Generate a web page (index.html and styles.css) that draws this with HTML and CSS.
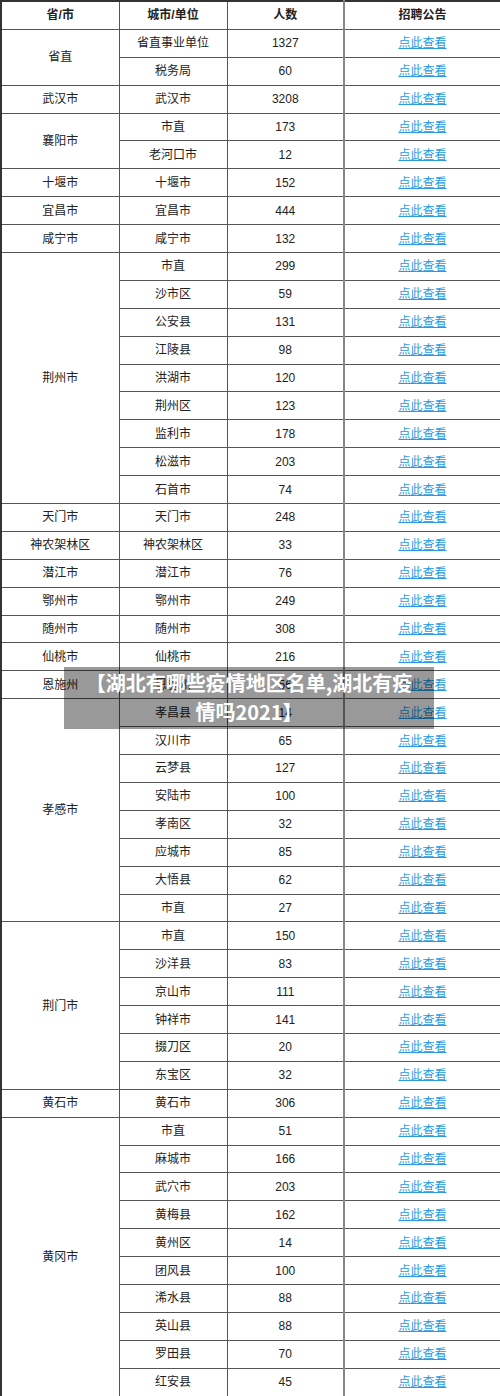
FILE: index.html
```html
<!DOCTYPE html>
<html lang="zh-CN">
<head>
<meta charset="utf-8">
<title>湖北有哪些疫情地区名单</title>
<link rel="stylesheet" href="styles.css">
</head>
<body>
<div class="page">
<table class="recruit">
<colgroup><col class="c1"><col class="c2"><col class="c3"><col class="c4"></colgroup>
<thead>
<tr><th>省/市</th><th>城市/单位</th><th>人数</th><th>招聘公告</th></tr>
</thead>
<tbody>
<tr><td rowspan="2">省直</td><td>省直事业单位</td><td>1327</td><td><a href="#">点此查看</a></td></tr>
<tr><td>税务局</td><td>60</td><td><a href="#">点此查看</a></td></tr>
<tr><td>武汉市</td><td>武汉市</td><td>3208</td><td><a href="#">点此查看</a></td></tr>
<tr><td rowspan="2">襄阳市</td><td>市直</td><td>173</td><td><a href="#">点此查看</a></td></tr>
<tr><td>老河口市</td><td>12</td><td><a href="#">点此查看</a></td></tr>
<tr><td>十堰市</td><td>十堰市</td><td>152</td><td><a href="#">点此查看</a></td></tr>
<tr><td>宜昌市</td><td>宜昌市</td><td>444</td><td><a href="#">点此查看</a></td></tr>
<tr><td>咸宁市</td><td>咸宁市</td><td>132</td><td><a href="#">点此查看</a></td></tr>
<tr><td rowspan="9">荆州市</td><td>市直</td><td>299</td><td><a href="#">点此查看</a></td></tr>
<tr><td>沙市区</td><td>59</td><td><a href="#">点此查看</a></td></tr>
<tr><td>公安县</td><td>131</td><td><a href="#">点此查看</a></td></tr>
<tr><td>江陵县</td><td>98</td><td><a href="#">点此查看</a></td></tr>
<tr><td>洪湖市</td><td>120</td><td><a href="#">点此查看</a></td></tr>
<tr><td>荆州区</td><td>123</td><td><a href="#">点此查看</a></td></tr>
<tr><td>监利市</td><td>178</td><td><a href="#">点此查看</a></td></tr>
<tr><td>松滋市</td><td>203</td><td><a href="#">点此查看</a></td></tr>
<tr><td>石首市</td><td>74</td><td><a href="#">点此查看</a></td></tr>
<tr><td>天门市</td><td>天门市</td><td>248</td><td><a href="#">点此查看</a></td></tr>
<tr><td>神农架林区</td><td>神农架林区</td><td>33</td><td><a href="#">点此查看</a></td></tr>
<tr><td>潜江市</td><td>潜江市</td><td>76</td><td><a href="#">点此查看</a></td></tr>
<tr><td>鄂州市</td><td>鄂州市</td><td>249</td><td><a href="#">点此查看</a></td></tr>
<tr><td>随州市</td><td>随州市</td><td>308</td><td><a href="#">点此查看</a></td></tr>
<tr><td>仙桃市</td><td>仙桃市</td><td>216</td><td><a href="#">点此查看</a></td></tr>
<tr><td>恩施州</td><td>恩施州</td><td>56</td><td><a href="#">点此查看</a></td></tr>
<tr><td rowspan="8">孝感市</td><td>孝昌县</td><td>14</td><td><a href="#">点此查看</a></td></tr>
<tr><td>汉川市</td><td>65</td><td><a href="#">点此查看</a></td></tr>
<tr><td>云梦县</td><td>127</td><td><a href="#">点此查看</a></td></tr>
<tr><td>安陆市</td><td>100</td><td><a href="#">点此查看</a></td></tr>
<tr><td>孝南区</td><td>32</td><td><a href="#">点此查看</a></td></tr>
<tr><td>应城市</td><td>85</td><td><a href="#">点此查看</a></td></tr>
<tr><td>大悟县</td><td>62</td><td><a href="#">点此查看</a></td></tr>
<tr><td>市直</td><td>27</td><td><a href="#">点此查看</a></td></tr>
<tr><td rowspan="6">荆门市</td><td>市直</td><td>150</td><td><a href="#">点此查看</a></td></tr>
<tr><td>沙洋县</td><td>83</td><td><a href="#">点此查看</a></td></tr>
<tr><td>京山市</td><td>111</td><td><a href="#">点此查看</a></td></tr>
<tr><td>钟祥市</td><td>141</td><td><a href="#">点此查看</a></td></tr>
<tr><td>掇刀区</td><td>20</td><td><a href="#">点此查看</a></td></tr>
<tr><td>东宝区</td><td>32</td><td><a href="#">点此查看</a></td></tr>
<tr><td>黄石市</td><td>黄石市</td><td>306</td><td><a href="#">点此查看</a></td></tr>
<tr><td rowspan="10">黄冈市</td><td>市直</td><td>51</td><td><a href="#">点此查看</a></td></tr>
<tr><td>麻城市</td><td>166</td><td><a href="#">点此查看</a></td></tr>
<tr><td>武穴市</td><td>203</td><td><a href="#">点此查看</a></td></tr>
<tr><td>黄梅县</td><td>162</td><td><a href="#">点此查看</a></td></tr>
<tr><td>黄州区</td><td>14</td><td><a href="#">点此查看</a></td></tr>
<tr><td>团风县</td><td>100</td><td><a href="#">点此查看</a></td></tr>
<tr><td>浠水县</td><td>88</td><td><a href="#">点此查看</a></td></tr>
<tr><td>英山县</td><td>88</td><td><a href="#">点此查看</a></td></tr>
<tr><td>罗田县</td><td>70</td><td><a href="#">点此查看</a></td></tr>
<tr><td>红安县</td><td>45</td><td><a href="#">点此查看</a></td></tr>
</tbody>
</table>
<div class="caption">【湖北有哪些疫情地区名单,湖北有疫情吗2021】</div>
</div>
</body>
</html>
```
FILE: styles.css
```css
html, body {
  margin: 0;
  padding: 0;
  background: #fff;
}
.page {
  position: relative;
  width: 500px;
  height: 1396px;
  overflow: hidden;
}
.recruit {
  width: 500px;
  border-collapse: collapse;
  table-layout: fixed;
  font-family: "Liberation Sans", "Noto Sans CJK SC", sans-serif;
  font-size: 12px;
  color: #222;
  border: 2px solid #333;
}
.c1 { width: 118px; }
.c2 { width: 108px; }
.c3 { width: 117px; }
.c4 { width: 157px; }
.recruit th,
.recruit td {
  border: 1px solid #555;
  text-align: center;
  vertical-align: middle;
  padding: 0;
  height: 26.9px;
  line-height: 16px;
}
.recruit th {
  font-weight: bold;
}
.recruit td:last-child,
.recruit th:last-child {
  border-left: 2px solid #888;
}
.recruit a {
  color: #2a9ae3;
  text-decoration: underline;
}
.caption {
  position: absolute;
  left: 64px;
  top: 667px;
  width: 370px;
  height: 62px;
  box-sizing: border-box;
  padding: 1px 14px 0;
  background: rgba(0, 0, 0, 0.4);
  color: #fff;
  font-family: "Noto Sans CJK SC", sans-serif;
  font-weight: bold;
  font-size: 20px;
  line-height: 29px;
  text-align: center;
}
```
